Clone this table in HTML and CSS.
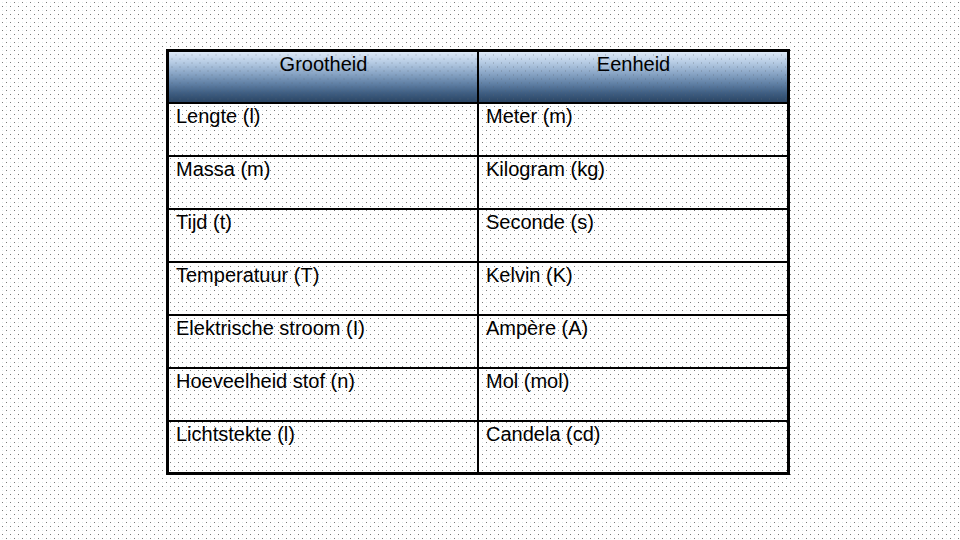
FILE: index.html
```html
<!DOCTYPE html>
<html lang="nl">
<head>
<meta charset="utf-8">
<title>Grootheden en eenheden</title>
<link rel="stylesheet" href="styles.css">
</head>
<body>
<main class="slide">
  <table class="units">
    <thead>
      <tr class="head-row"><th>Grootheid</th><th>Eenheid</th></tr>
    </thead>
    <tbody>
      <tr><td>Lengte (l)</td><td>Meter (m)</td></tr>
      <tr><td>Massa (m)</td><td>Kilogram (kg)</td></tr>
      <tr><td>Tijd (t)</td><td>Seconde (s)</td></tr>
      <tr><td>Temperatuur (T)</td><td>Kelvin (K)</td></tr>
      <tr><td>Elektrische stroom (I)</td><td>Ampère (A)</td></tr>
      <tr><td>Hoeveelheid stof (n)</td><td>Mol (mol)</td></tr>
      <tr><td>Lichtstekte (l)</td><td>Candela (cd)</td></tr>
    </tbody>
  </table>
</main>
</body>
</html>
```
FILE: styles.css
```css
html, body {
  margin: 0;
  padding: 0;
}
body {
  width: 960px;
  height: 540px;
  overflow: hidden;
  background-color: #ffffff;
  background-image:
    conic-gradient(from 270deg at 1px 1px, #7a7a7a 90deg, transparent 0),
    conic-gradient(from 270deg at 1px 1px, #7a7a7a 90deg, transparent 0),
    conic-gradient(from 270deg at 1px 1px, #e4eeee 90deg, transparent 0),
    conic-gradient(from 270deg at 1px 1px, #e4eeee 90deg, transparent 0);
  background-size: 8px 8px;
  background-position: 6px 2px, 2px 6px, 2px 2px, 6px 6px;
  font-family: "Liberation Sans", Arial, sans-serif;
}
.slide {
  padding: 49px 0 0 166px;
}
.units {
  border-collapse: collapse;
  table-layout: fixed;
  width: 624px;
  border: 3px solid #000;
  font-size: 20px;
  color: #000;
}
.units tr {
  height: 53px;
}
.units .head-row {
  height: 52px;
}
.units th,
.units td {
  border: 2px solid #000;
  padding: 1px 6px 0 7px;
  vertical-align: top;
  text-align: left;
  font-weight: normal;
  line-height: 23px;
}
.units th {
  text-align: center;
  padding-top: 1px;
  background-image:
    conic-gradient(from 270deg at 1px 1px, rgba(90,100,110,0.5) 90deg, transparent 0),
    conic-gradient(from 270deg at 1px 1px, rgba(90,100,110,0.5) 90deg, transparent 0),
    linear-gradient(to bottom, #dde8f6 0%, #b8cde5 20%, #8ba7c7 42%, #5f7fa4 64%, #3f5e82 82%, #2a4564 100%);
  background-size: 8px 8px, 8px 8px, 100% 100%;
  background-position: 6px 2px, 2px 6px, 0 0;
  background-repeat: repeat, repeat, no-repeat;
}
```
